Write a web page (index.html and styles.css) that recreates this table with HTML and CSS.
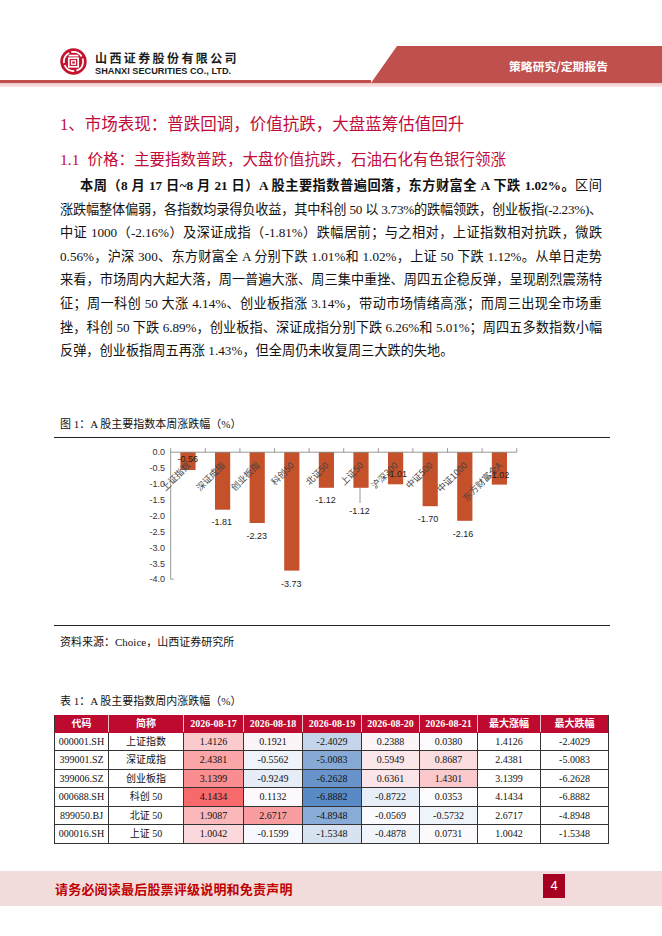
FILE: index.html
```html
<!DOCTYPE html>
<html lang="zh-CN">
<head>
<meta charset="utf-8">
<title>策略研究/定期报告</title>
<link rel="stylesheet" href="styles.css">
</head>
<body>
<div class="page">
  <header class="top">
    <div class="brand">
      <svg class="logo" width="27" height="27" viewBox="0 0 27 27">
        <circle cx="13.5" cy="13.5" r="13.2" fill="#c4122f"/>
        <circle cx="13.5" cy="13.5" r="9.6" fill="none" stroke="#fff" stroke-width="1.7" stroke-dasharray="12 2.2"/>
        <line x1="8.6" y1="7.6" x2="18.4" y2="7.6" stroke="#fff" stroke-width="1.7"/>
        <rect x="8.8" y="10.2" width="9.4" height="8.6" fill="none" stroke="#fff" stroke-width="1.7"/>
        <rect x="11.6" y="12.8" width="3.8" height="3.4" fill="none" stroke="#fff" stroke-width="1.3"/>
      </svg>
      <div class="brand-text">
        <div class="cn">山西证券股份有限公司</div>
        <div class="en">SHANXI SECURITIES CO., LTD.</div>
      </div>
    </div>
    <div class="band">策略研究/定期报告</div>
  </header>
  <div class="strip"></div>

  <main class="content">
    <h1 class="h1">1、市场表现：普跌回调，价值抗跌，大盘蓝筹估值回升</h1>
    <h2 class="h2"><span class="num">1.1</span>价格：主要指数普跌，大盘价值抗跌，石油石化有色银行领涨</h2>

    <p class="body-text">
      <span class="ln first"><b>本周（8 月 17 日~8 月 21 日）A 股主要指数普遍回落，东方财富全 A 下跌 1.02%。</b>区间</span>
      <span class="ln t2">涨跌幅整体偏弱，各指数均录得负收益，其中科创 50 以 3.73%的跌幅领跌，创业板指(-2.23%)、</span>
      <span class="ln t1">中证 1000（-2.16%）及深证成指（-1.81%）跌幅居前；与之相对，上证指数相对抗跌，微跌</span>
      <span class="ln">0.56%，沪深 300、东方财富全 A 分别下跌 1.01%和 1.02%，上证 50 下跌 1.12%。从单日走势</span>
      <span class="ln t1">来看，市场周内大起大落，周一普遍大涨、周三集中重挫、周四五企稳反弹，呈现剧烈震荡特</span>
      <span class="ln">征；周一科创 50 大涨 4.14%、创业板指涨 3.14%，带动市场情绪高涨；而周三出现全市场重</span>
      <span class="ln t1">挫，科创 50 下跌 6.89%，创业板指、深证成指分别下跌 6.26%和 5.01%；周四五多数指数小幅</span>
      <span class="ln last">反弹，创业板指周五再涨 1.43%，但全周仍未收复周三大跌的失地。</span>
    </p>

    <div class="fig-cap">图 1：A 股主要指数本周涨跌幅（%）</div>
    <svg class="chart" width="556" height="187" viewBox="0 0 556 187">
      <g class="bars">
        <rect x="126.4" y="14.2" width="15.2" height="17.8"/>
        <rect x="161" y="14.2" width="15.2" height="57.5"/>
        <rect x="195.6" y="14.2" width="15.2" height="70.8"/>
        <rect x="230.2" y="14.2" width="15.2" height="118.4"/>
        <rect x="264.8" y="14.2" width="15.2" height="35.6"/>
        <rect x="299.4" y="14.2" width="15.2" height="35.6"/>
        <rect x="334" y="14.2" width="15.2" height="32.1"/>
        <rect x="368.6" y="14.2" width="15.2" height="54"/>
        <rect x="403.2" y="14.2" width="15.2" height="68.6"/>
        <rect x="437.8" y="14.2" width="15.2" height="32.4"/>
      </g>
      <g class="axis">
        <line x1="116.7" y1="14.2" x2="116.7" y2="141.2"/>
        <line x1="116.7" y1="141.2" x2="119.7" y2="141.2"/>
        <line x1="116.7" y1="14.2" x2="462.7" y2="14.2"/>
        <line x1="116.7" y1="10.2" x2="116.7" y2="14.2"/>
        <line x1="151.3" y1="10.2" x2="151.3" y2="14.2"/>
        <line x1="185.9" y1="10.2" x2="185.9" y2="14.2"/>
        <line x1="220.5" y1="10.2" x2="220.5" y2="14.2"/>
        <line x1="255.1" y1="10.2" x2="255.1" y2="14.2"/>
        <line x1="289.7" y1="10.2" x2="289.7" y2="14.2"/>
        <line x1="324.3" y1="10.2" x2="324.3" y2="14.2"/>
        <line x1="358.9" y1="10.2" x2="358.9" y2="14.2"/>
        <line x1="393.5" y1="10.2" x2="393.5" y2="14.2"/>
        <line x1="428.1" y1="10.2" x2="428.1" y2="14.2"/>
        <line x1="462.7" y1="10.2" x2="462.7" y2="14.2"/>
        <line x1="306" y1="49.8" x2="306" y2="65"/>
      </g>
      <g class="ylab">
        <text x="111" y="17.4">0.0</text>
        <text x="111" y="33.3">-0.5</text>
        <text x="111" y="49.2">-1.0</text>
        <text x="111" y="65">-1.5</text>
        <text x="111" y="80.9">-2.0</text>
        <text x="111" y="96.8">-2.5</text>
        <text x="111" y="112.7">-3.0</text>
        <text x="111" y="128.5">-3.5</text>
        <text x="111" y="144.4">-4.0</text>
      </g>
      <g class="clab">
        <text transform="translate(137 28) rotate(-45)">上证指数</text>
        <text transform="translate(171.6 28) rotate(-45)">深证成指</text>
        <text transform="translate(206.2 28) rotate(-45)">创业板指</text>
        <text transform="translate(240.8 28) rotate(-45)">科创50</text>
        <text transform="translate(275.4 28) rotate(-45)">北证50</text>
        <text transform="translate(310 28) rotate(-45)">上证50</text>
        <text transform="translate(344.6 28) rotate(-45)">沪深300</text>
        <text transform="translate(379.2 28) rotate(-45)">中证500</text>
        <text transform="translate(413.8 28) rotate(-45)">中证1000</text>
        <text transform="translate(448.4 28) rotate(-45)">东方财富全A</text>
      </g>
      <g class="vlab">
        <text x="133.7" y="24.1">-0.56</text>
        <text x="167.7" y="87.1">-1.81</text>
        <text x="202.7" y="100.5">-2.23</text>
        <text x="237.3" y="148.8">-3.73</text>
        <text x="271.5" y="64.8">-1.12</text>
        <text x="305.5" y="75.8">-1.12</text>
        <text x="342.7" y="39.1">-1.01</text>
        <text x="374" y="83.5">-1.70</text>
        <text x="409" y="98.5">-2.16</text>
        <text x="445" y="39.8">-1.02</text>
      </g>
    </svg>
    <div class="source">资料来源：Choice，山西证券研究所</div>

    <div class="tbl-cap">表 1：A 股主要指数周内涨跌幅（%）</div>
    <table class="tbl">
      <colgroup>
        <col class="c-code"><col class="c-name"><col class="c-d1"><col class="c-d"><col class="c-d"><col class="c-d2"><col class="c-d2"><col class="c-max"><col class="c-min">
      </colgroup>
      <thead>
        <tr><th>代码</th><th>简称</th><th>2026-08-17</th><th>2026-08-18</th><th>2026-08-19</th><th>2026-08-20</th><th>2026-08-21</th><th>最大涨幅</th><th>最大跌幅</th></tr>
      </thead>
      <tbody>
        <tr><td>000001.SH</td><td class="nm">上证指数</td><td style="background:#fbcacd">1.4126</td><td style="background:#fcf5f8">0.1921</td><td style="background:#c4d4eb">-2.4029</td><td style="background:#fcf4f7">0.2388</td><td style="background:#fcfbfe">0.0380</td><td>1.4126</td><td>-2.4029</td></tr>
        <tr><td>399001.SZ</td><td class="nm">深证成指</td><td style="background:#faa6a8">2.4381</td><td style="background:#eff3fa">-0.5562</td><td style="background:#86a9d6">-5.0083</td><td style="background:#fbe7ea">0.5949</td><td style="background:#fbdde0">0.8687</td><td>2.4381</td><td>-5.0083</td></tr>
        <tr><td>399006.SZ</td><td class="nm">创业板指</td><td style="background:#f98d8f">3.1399</td><td style="background:#e6edf7">-0.9249</td><td style="background:#6994cb">-6.2628</td><td style="background:#fbe5e8">0.6361</td><td style="background:#fbc9cc">1.4301</td><td>3.1399</td><td>-6.2628</td></tr>
        <tr><td>000688.SH</td><td class="nm">科创 50</td><td style="background:#f8696b">4.1434</td><td style="background:#fcf8fb">0.1132</td><td style="background:#5a8ac6">-6.8882</td><td style="background:#e8eef8">-0.8722</td><td style="background:#fcfbfe">0.0353</td><td>4.1434</td><td>-6.8882</td></tr>
        <tr><td>899050.BJ</td><td class="nm">北证 50</td><td style="background:#fab8bb">1.9087</td><td style="background:#f99da0">2.6717</td><td style="background:#89abd7">-4.8948</td><td style="background:#fbfbff">-0.0569</td><td style="background:#eff3fa">-0.5732</td><td>2.6717</td><td>-4.8948</td></tr>
        <tr><td>000016.SH</td><td class="nm">上证 50</td><td style="background:#fbd8db">1.0042</td><td style="background:#f8f9fe">-0.1599</td><td style="background:#d8e3f2">-1.5348</td><td style="background:#f1f4fb">-0.4878</td><td style="background:#fcf9fc">0.0731</td><td>1.0042</td><td>-1.5348</td></tr>
      </tbody>
    </table>
  </main>

  <footer class="foot">
    <div class="foot-text">请务必阅读最后股票评级说明和免责声明</div>
    <div class="pageno">4</div>
  </footer>
</div>
</body>
</html>
```

FILE: styles.css
```css
html, body {
  margin: 0;
  padding: 0;
  background: #fff;
}
body {
  font-family: "Liberation Serif", "Noto Sans CJK SC", serif;
  color: #111;
}
.page {
  width: 662px;
  height: 936px;
  overflow: hidden;
}

/* header */
.top {
  display: flex;
  height: 83px;
}
.brand {
  flex: 1;
  display: flex;
  align-items: flex-start;
  gap: 8px;
  padding: 48px 0 0 60px;
  border-bottom: 3px solid #c0504d;
  box-sizing: border-box;
}
.logo {
  display: block;
  flex: none;
}
.brand-text {
  padding-top: 3px;
}
.cn {
  font-family: "Noto Sans CJK SC", sans-serif;
  font-weight: 700;
  font-size: 12px;
  line-height: 13px;
  letter-spacing: 2.4px;
  color: #1c1c1c;
}
.en {
  font-family: "Liberation Sans", Arial, sans-serif;
  font-weight: 700;
  font-size: 9.2px;
  line-height: 12px;
  margin-top: 1px;
  color: #1c1c1c;
}
.band {
  width: 291px;
  margin-top: 46px;
  height: 37px;
  box-sizing: border-box;
  background: #c0504d;
  clip-path: polygon(26px 0, 100% 0, 100% 100%, 0 100%);
  color: #fff;
  font-family: "Noto Sans CJK SC", sans-serif;
  font-weight: 700;
  font-size: 11.8px;
  line-height: 36px;
  padding-top: 2px;
  text-align: right;
  padding-right: 54px;
}
.strip {
  height: 4px;
  background: linear-gradient(#f0c6c6, #f9e6e6);
}

/* content */
.content {
  margin-left: 54px;
  width: 556px;
}
.h1 {
  margin: 26px 0 0;
  padding-left: 6px;
  font-size: 16.5px;
  line-height: 24px;
  font-weight: 400;
  color: #c20a3a;
}
.h2 {
  margin: 11px 0 0;
  padding-left: 6px;
  font-size: 15.5px;
  line-height: 24px;
  font-weight: 400;
  color: #c20a3a;
}
.h2 .num {
  margin-right: 8px;
}
.body-text {
  margin: 2px 0 0;
  padding: 0 8px 0 6px;
  font-size: 13.2px;
  line-height: 23.6px;
  color: #111;
}
.ln {
  display: block;
  white-space: nowrap;
  text-align: justify;
  text-align-last: justify;
}
.ln.first {
  padding-left: 20px;
}
.ln.last {
  text-align-last: left;
}
.ln.t1 {
  letter-spacing: -0.1px;
}
.ln.t2 {
  letter-spacing: -0.3px;
}
.body-text b {
  font-weight: 700;
}

.fig-cap {
  margin-top: 52px;
  padding: 0 0 4px 6px;
  font-size: 11px;
  line-height: 18px;
  border-bottom: 1.5px solid #222;
}
.chart {
  display: block;
}
.bars rect {
  fill: #c5512a;
}
.axis line {
  stroke: #7f7f7f;
  stroke-width: 0.8;
}
.ylab text {
  font-family: "Liberation Sans", Arial, sans-serif;
  font-size: 9px;
  fill: #333;
  text-anchor: end;
}
.vlab text {
  font-family: "Liberation Sans", Arial, sans-serif;
  font-size: 9px;
  fill: #222;
  text-anchor: middle;
}
.clab text {
  font-family: "Noto Sans CJK SC", sans-serif;
  font-size: 9px;
  fill: #444;
  text-anchor: end;
}
.source {
  border-top: 1.5px solid #222;
  padding: 7px 0 0 6px;
  font-size: 11px;
  line-height: 18px;
}
.tbl-cap {
  margin-top: 41px;
  padding-left: 6px;
  font-size: 11px;
  line-height: 18px;
}

/* table */
.tbl {
  margin-top: 5px;
  border-collapse: collapse;
  table-layout: fixed;
  width: 554px;
  font-size: 10px;
}
.c-code { width: 54px; }
.c-name { width: 75px; }
.c-d1 { width: 60px; }
.c-d { width: 59px; }
.c-d2 { width: 58px; }
.c-max { width: 63px; }
.c-min { width: 68px; }
.tbl th {
  background: #bf0a30;
  color: #fff;
  font-weight: 700;
  height: 16px;
  padding: 0;
  line-height: 14px;
  border: 1px solid #bf0a30;
  border-left-color: #f0c0c8;
  border-right-color: #f0c0c8;
}
.tbl th:first-child { border-left-color: #333; }
.tbl th:last-child { border-right-color: #333; }
.tbl td {
  height: 17.5px;
  padding: 0;
  line-height: 14px;
  text-align: center;
  border: 1px solid #333;
  color: #111;
}
.tbl td.nm {
  font-family: "Noto Sans CJK SC", sans-serif;
}
.tbl td.nm {
  font-family: "Liberation Serif", "Noto Sans CJK SC", serif;
}

/* footer */
.foot {
  margin-top: 27px;
  height: 35px;
  background: #f2dcdb;
  display: flex;
  align-items: center;
  padding-left: 55px;
}
.foot-text {
  font-family: "Noto Sans CJK SC", sans-serif;
  font-weight: 700;
  font-size: 13px;
  letter-spacing: 0.2px;
  color: #c00000;
}
.pageno {
  margin-left: auto;
  margin-right: 97px;
  margin-bottom: 4px;
  width: 22px;
  height: 24px;
  background: #a50021;
  color: #fff;
  font-family: "Liberation Sans", Arial, sans-serif;
  font-size: 13px;
  line-height: 24px;
  text-align: center;
}
```
